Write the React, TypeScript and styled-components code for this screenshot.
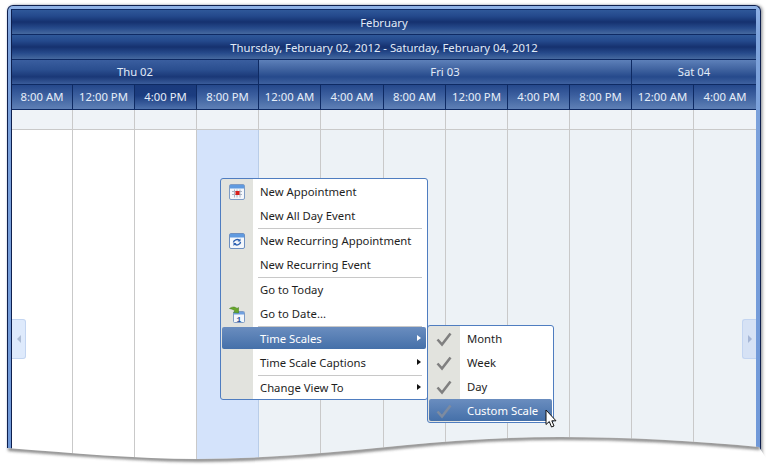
import styled, { createGlobalStyle } from "styled-components";

const GlobalStyle = createGlobalStyle`
	html, body {
		margin: 0;
		padding: 0;
		background: #fff;
	}
	body {
		font-family: "Noto Sans", "Open Sans", sans-serif;
		font-size: 11.3px;
	}
`;

const Page = styled.div`
	position: relative;
	width: 774px;
	height: 475px;
	overflow: hidden;
	padding: 5px 0 0 7px;
	box-sizing: border-box;
`;

const Frame = styled.div`
	position: relative;
	width: 754px;
	height: 470px;
	box-sizing: border-box;
	background: linear-gradient(#8fb2e6 0, #7ea3dc 30px, #6f98d8);
	border: 1px solid #0e1f4d;
	border-bottom: 0;
	border-radius: 6px 6px 0 0;
	padding: 3px 4px 0 4px;
	box-shadow: 2px 0 3px rgba(0, 0, 0, 0.3), 0 0 2px rgba(120, 150, 200, 0.5);
`;

const Scheduler = styled.div`
	display: flex;
	flex-direction: column;
	height: 100%;
	border-left: 1px solid #0e1f4d;
	border-top: 1px solid #0e2a63;
	margin-left: -1px;
	box-sizing: border-box;
`;

const glossy = `
	background: linear-gradient(
		#2f5899 0%,
		#24498c 25%,
		#15316f 50%,
		#264a8b 75%,
		#46699f 100%
	);
`;

const Band = styled.div`
	${glossy}
	flex: none;
	height: 25px;
	line-height: 25px;
	box-sizing: border-box;
	border-bottom: 1px solid #0e2a63;
	color: #e1ebf8;
	text-align: center;
`;

const Row = styled.div`
	display: grid;
	grid-template-columns: 61px repeat(4, 62px) 63px repeat(5, 62px) 1fr;
	height: 25px;
	flex: none;
`;

const DayCell = styled.div<{ $span: number; $light?: boolean }>`
	background: ${p =>
		p.$light
			? "linear-gradient(#5d80b9 0%, #3f629f 40%, #264a8c 70%, #3f619f 100%)"
			: "linear-gradient(#3a5e9f 0%, #2b4f90 40%, #1a3877 70%, #3a5c9a 100%)"};
	grid-column: span ${p => p.$span};
	box-sizing: border-box;
	line-height: 24px;
	border-bottom: 1px solid #0e2a63;
	border-right: 1px solid #0e2a63;
	color: #e1ebf8;
	text-align: center;
	&:last-child {
		border-right: 0;
	}
`;

const HourCell = styled.div<{ $dark?: boolean }>`
	box-sizing: border-box;
	line-height: 24px;
	border-bottom: 1px solid #0e2a63;
	border-right: 1px solid #0e2a63;
	color: #e6eef9;
	text-align: center;
	background: ${p =>
		p.$dark
			? "linear-gradient(#1a3a7c 0%, #1c3d80 45%, #3a5d9c 80%, #4f72ac 100%)"
			: "linear-gradient(#25488b 0%, #3a5d9d 40%, #4c6fa9 70%, #5f80b6 100%)"};
	&:last-child {
		border-right: 0;
	}
`;

const AllDayRow = styled(Row)`
	height: 20px;
`;

const AllDayCell = styled.div`
	background: #eff3f7;
	box-sizing: border-box;
	border-right: 1px solid #c9c9c9;
	border-bottom: 1px solid #c9c9c9;
	&:last-child {
		border-right: 0;
	}
`;

const BodyRow = styled(Row)`
	flex: 1;
	height: auto;
`;

const BodyCell = styled.div<{ $kind: "work" | "selected" | "off" }>`
	box-sizing: border-box;
	border-right: 1px solid ${p => (p.$kind === "selected" ? "#b9cde8" : "#c9c9c9")};
	background: ${p =>
		p.$kind === "work" ? "#fff" : p.$kind === "selected" ? "#d4e3fb" : "#edf2f6"};
	&:last-child {
		border-right: 0;
	}
`;

const NavButton = styled.div<{ $side: "left" | "right" }>`
	position: absolute;
	top: 313px;
	${p => (p.$side === "left" ? "left: 4px;" : "right: 4px;")}
	width: 14px;
	height: 40px;
	box-sizing: border-box;
	display: flex;
	align-items: center;
	justify-content: center;
	background: ${p => (p.$side === "left" ? "#deeafc" : "#d6e2f5")};
	border: 1px solid #c3d5f1;
	${p => (p.$side === "left" ? "border-left: 0;" : "border-right: 0;")}
	border-radius: ${p => (p.$side === "left" ? "0 3px 3px 0" : "3px 0 0 3px")};
`;

const NavArrow = styled.div<{ $side: "left" | "right" }>`
	width: 0;
	height: 0;
	border-top: 4px solid transparent;
	border-bottom: 4px solid transparent;
	${p =>
		p.$side === "left"
			? "border-right: 4px solid #aebdd6;"
			: "border-left: 4px solid #a5b6d6;"}
`;

const Menu = styled.div<{ $left: number; $top: number; $width: number }>`
	position: absolute;
	left: ${p => p.$left}px;
	top: ${p => p.$top}px;
	width: ${p => p.$width}px;
	box-sizing: border-box;
	padding: 1px 1px 0;
	border: 1px solid #4f7dc0;
	border-radius: 3px;
	background: linear-gradient(to right, #e2e3de 32px, #fff 32px);
	color: #1e1e1e;
`;

const MenuItem = styled.div<{ $active?: boolean }>`
	position: relative;
	height: 24px;
	line-height: 24px;
	box-sizing: border-box;
	padding-left: 38px;
	border-radius: 2px;
	&:last-child {
		height: 23px;
	}
	${p =>
		p.$active &&
		`
		color: #fff;
		height: 22px;
		margin-bottom: 2px;
		background: linear-gradient(#6a8dbf, #4570a9);
		&:last-child {
			height: 22px;
			margin-bottom: 1px;
		}
	`}
`;

const Separator = styled.div`
	height: 1px;
	margin-left: 36px;
	margin-right: 4px;
	background: #c8c8c8;
`;

const IconSlot = styled.div`
	position: absolute;
	left: 0;
	top: 0;
	width: 30px;
	height: 24px;
	display: flex;
	align-items: center;
	justify-content: center;
`;

const SubArrow = styled.div<{ $active?: boolean }>`
	position: absolute;
	right: 5px;
	top: 8px;
	width: 0;
	height: 0;
	border-top: 3.5px solid transparent;
	border-bottom: 3.5px solid transparent;
	border-left: 4px solid ${p => (p.$active ? "#fff" : "#111")};
`;

const TornEdge = styled.svg`
	position: absolute;
	left: 0;
	top: 0;
	pointer-events: none;
`;

const Cursor = styled.svg`
	position: absolute;
	left: 545px;
	top: 409px;
`;

const hours = [
	"8:00 AM", "12:00 PM", "4:00 PM", "8:00 PM", "12:00 AM", "4:00 AM",
	"8:00 AM", "12:00 PM", "4:00 PM", "8:00 PM", "12:00 AM", "4:00 AM",
];

const columns = Array.from({ length: 12 }, (_, i) => i);

function AppointmentIcon() {
	return (
		<svg width="16" height="16" viewBox="0 0 16 16">
			<rect x="0.5" y="0.5" width="15" height="15" rx="1.5" fill="#f4f7fb" stroke="#7f9cc4" />
			<rect x="1" y="1" width="14" height="3.5" fill="#5f9ae0" />
			<path d="M3 7.5h10M3 10.5h10M5.5 5.5v8M8 5.5v8M11 5.5v8" stroke="#aab4c4" strokeWidth="1" />
			<rect x="6.5" y="7" width="4" height="4" fill="#d8201c" />
		</svg>
	);
}

function RecurringIcon() {
	return (
		<svg width="16" height="16" viewBox="0 0 16 16">
			<rect x="0.5" y="0.5" width="15" height="15" rx="1.5" fill="#f4f7fb" stroke="#6d8fc0" />
			<rect x="1" y="1" width="14" height="3.5" fill="#5f9ae0" />
			<path d="M4.5 9.5a3.5 3 0 0 1 6-2M11.5 9a3.5 3 0 0 1-6 2" fill="none" stroke="#2a5fb0" strokeWidth="1.4" />
			<path d="M11.5 5.5v3h-3zM4.5 13v-3h3z" fill="#2a5fb0" />
		</svg>
	);
}

function GoToDateIcon() {
	return (
		<svg width="16" height="17" viewBox="0 0 16 17">
			<rect x="4.5" y="5.5" width="11" height="11" rx="1" fill="#f4f7fb" stroke="#7f9cc4" />
			<rect x="5" y="6" width="10" height="2.5" fill="#6fa0df" />
			<text x="10" y="15.5" fontSize="8" fontWeight="700" fill="#24509a" textAnchor="middle" fontFamily="Liberation Mono, monospace">1</text>
			<path d="M0.5 2.5C3 0.5 6 0.5 8 2.5L9.5 1.5V7L4.5 6.5 6 5C4.5 3.5 3 3 0.5 2.5z" fill="#68a62a" stroke="#3f7d18" strokeWidth="0.5" />
		</svg>
	);
}

function CheckIcon({ active }: { active?: boolean }) {
	return (
		<svg width="16" height="16" viewBox="0 0 16 16">
			<path d="M1.5 8.5 6 13.5 14.5 2.5" fill="none" stroke={active ? "#7d8ba0" : "#808080"} strokeWidth="2.6" />
		</svg>
	);
}

function ContextMenu() {
	return (
		<Menu $left={212} $top={172} $width={208}>
			<MenuItem>
				<IconSlot><AppointmentIcon /></IconSlot>
				New Appointment
			</MenuItem>
			<MenuItem>New All Day Event</MenuItem>
			<Separator />
			<MenuItem>
				<IconSlot><RecurringIcon /></IconSlot>
				New Recurring Appointment
			</MenuItem>
			<MenuItem>New Recurring Event</MenuItem>
			<Separator />
			<MenuItem>Go to Today</MenuItem>
			<MenuItem>
				<IconSlot><GoToDateIcon /></IconSlot>
				Go to Date...
			</MenuItem>
			<Separator />
			<MenuItem $active>
				Time Scales
				<SubArrow $active />
			</MenuItem>
			<MenuItem>
				Time Scale Captions
				<SubArrow />
			</MenuItem>
			<Separator />
			<MenuItem>
				Change View To
				<SubArrow />
			</MenuItem>
		</Menu>
	);
}

function ScaleMenu() {
	const scales = ["Month", "Week", "Day", "Custom Scale"];
	return (
		<Menu $left={419} $top={319} $width={127}>
			{scales.map((name, i) => (
				<MenuItem key={name} $active={i === 3}>
					<IconSlot><CheckIcon active={i === 3} /></IconSlot>
					{name}
				</MenuItem>
			))}
		</Menu>
	);
}

const edge = "M0 443C65 448 130 454 190 454C260 454 330 447 400 440C450 435 500 432 553 432C620 432 690 436 752 442";

function App() {
	return (
		<>
			<GlobalStyle />
			<Page>
				<Frame>
					<Scheduler>
						<Band>February</Band>
						<Band>Thursday, February 02, 2012 - Saturday, February 04, 2012</Band>
						<Row>
							<DayCell $span={4}>Thu 02</DayCell>
							<DayCell $span={6} $light>Fri 03</DayCell>
							<DayCell $span={2} $light>Sat 04</DayCell>
						</Row>
						<Row>
							{hours.map((h, i) => (
								<HourCell key={i} $dark={i === 2}>{h}</HourCell>
							))}
						</Row>
						<AllDayRow>
							{columns.map(i => <AllDayCell key={i} />)}
						</AllDayRow>
						<BodyRow>
							{columns.map(i => (
								<BodyCell key={i} $kind={i < 3 ? "work" : i === 3 ? "selected" : "off"} />
							))}
						</BodyRow>
					</Scheduler>
					<NavButton $side="left"><NavArrow $side="left" /></NavButton>
					<NavButton $side="right"><NavArrow $side="right" /></NavButton>
					<ContextMenu />
					<ScaleMenu />
				</Frame>
				<TornEdge width="774" height="475" viewBox="-7 -5 774 475">
					<defs>
						<clipPath id="below">
							<path d={`${edge}L770 470L-10 470Z`} />
						</clipPath>
						<filter id="soft" x="-5%" y="-50%" width="110%" height="200%">
							<feGaussianBlur stdDeviation="1.4" />
						</filter>
					</defs>
					<path d={`${edge}L770 470L-10 470Z`} fill="#fff" />
					<g clipPath="url(#below)">
						<path d={edge} transform="translate(1 1)" fill="none" stroke="#666" strokeWidth="3.5" opacity="0.85" filter="url(#soft)" />
					</g>
				</TornEdge>
				<Cursor width="13" height="20" viewBox="0 0 13 20">
					<path d="M1 1V15.5L4.3 12.5 6.5 18 9 17 6.8 11.8H11Z" fill="#fff" stroke="#111" strokeWidth="1" />
				</Cursor>
			</Page>
		</>
	);
}

export default App;
